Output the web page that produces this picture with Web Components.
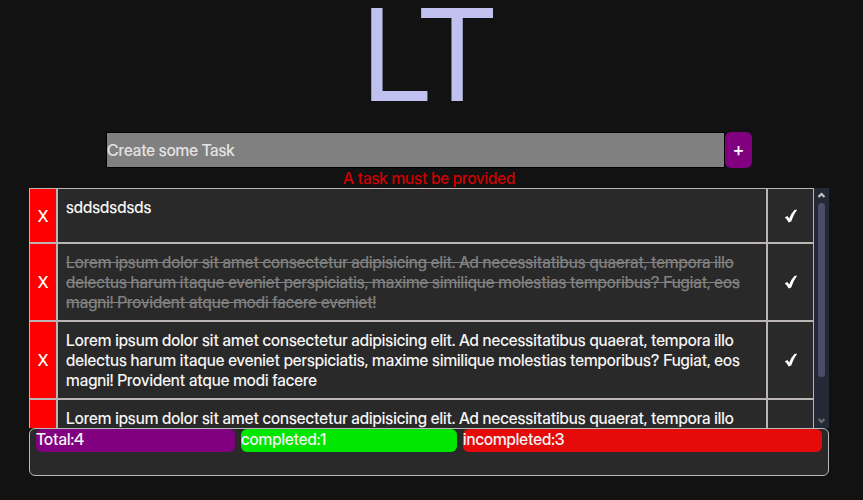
<!DOCTYPE html>
<html lang="en">
<head>
<meta charset="utf-8">
<title>LT</title>
<style>
body { margin: 0; background: #121212; color: #f5f5f5; font: 500 16px/20px "Inter Display", Inter, "Liberation Sans", sans-serif; }
</style>
</head>
<body>
<lt-app></lt-app>
<script>
const define = (name, html, setup) => {
  const template = document.createElement("template");
  template.innerHTML = html;
  customElements.define(name, class extends HTMLElement {
    constructor() {
      super();
      this.attachShadow({ mode: "open" }).append(template.content.cloneNode(true));
    }
    connectedCallback() { if (setup) setup(this, this.shadowRoot); }
  });
};

define("task-form", `
<style>
:host { display: block; padding: 0 77px; text-align: center; }
form { display: flex; height: 36px; }
input { flex: 1; min-width: 0; box-sizing: border-box; margin: 0; padding: 0; border: 1px solid #000; border-radius: 0; background: #808080; color: #f5f5f5; font: inherit; }
input::placeholder { color: #e4e4e4; opacity: 1; }
button { width: 27px; padding: 0; border: 0; border-radius: 6px; background: #800080; color: #fff; font: inherit; font-size: 18px; }
p { margin: 0; padding-top: 1px; line-height: 19px; color: #d00000; }
</style>
<form novalidate>
  <input type="text" placeholder="Create some Task" aria-label="Create some Task" aria-describedby="error">
  <button type="submit" aria-label="Add task">+</button>
</form>
<p id="error" role="alert">A task must be provided</p>`,
(host, root) => root.querySelector("form").addEventListener("submit", e => e.preventDefault()));

define("task-row", `
<style>
:host { display: flex; min-height: 55px; box-sizing: border-box; }
button, .text { box-sizing: border-box; border: 1px solid #bbb5b5; border-radius: 0; }
button { padding: 0; color: #fff; font: inherit; }
.remove { width: 28px; background: #f00; }
.text { flex: 1; padding: 8px; background: #292929; }
.done { width: 47px; background: #292929; }
svg { display: block; margin: auto; }
:host([completed]) .text { color: #808080; text-decoration: line-through; }
</style>
<button class="remove" aria-label="Remove task">X</button>
<div class="text"><slot></slot></div>
<button class="done" aria-label="Toggle completed"><svg width="14" height="14" viewBox="0 0 14 14"><path d="M.8 8.2 3.4 7.1 5.2 9.4Q7.4 4 10.4 1L13.2.6Q9.8 5.2 7.2 12.4L4.6 13.6Q3 10.2.8 8.2Z" fill="#fff"/></svg></button>`);

define("scroll-rail", `
<style>
:host { display: flex; flex-direction: column; align-items: center; width: 15px; background: #242936; }
svg { flex: none; display: block; }
.track { flex: 1; width: 7px; }
.thumb { height: 83%; border-radius: 4px; background: #4b4d66; }
</style>
<svg width="15" height="15" viewBox="0 0 15 15"><path d="M4.5 9 7.5 6 10.5 9" fill="none" stroke="#c4c4c4" stroke-width="2.2"/></svg>
<div class="track"><div class="thumb"></div></div>
<svg width="15" height="15" viewBox="0 0 15 15"><path d="M4.5 6 7.5 9 10.5 6" fill="none" stroke="#6c6c6c" stroke-width="2.2"/></svg>`);

define("task-list", `
<style>
:host { display: flex; height: 48vh; }
.rows { flex: 1; min-width: 0; overflow: auto; scrollbar-width: none; }
</style>
<div class="rows"><slot></slot></div>
<scroll-rail aria-hidden="true"></scroll-rail>`);

define("task-stat", `
<style>
:host { display: block; padding-bottom: 3px; border-radius: 6px; background: var(--stat-color); }
</style><slot></slot>`);

define("task-summary", `
<style>
:host { display: grid; grid-template-columns: 199fr 216fr 359fr; gap: 6px; align-items: start; box-sizing: border-box; min-height: 48px; padding: 0 6px; border: 1px solid #b8b8b8; border-radius: 6px; background: #292929; }
</style><slot></slot>`);

define("lt-app", `
<style>
:host { display: block; padding: 0 34px 0 29px; }
h1 { margin: 0; height: 132px; font-size: 128px; line-height: 110px; font-weight: 400; text-align: center; color: #c1c1f0; }
.total { --stat-color: #800080; }
.complete { --stat-color: #00e600; }
.incomplete { --stat-color: #e60b0b; }
</style>
<h1>LT</h1>
<task-form></task-form>
<task-list>
  <task-row>sddsdsdsds</task-row>
  <task-row completed>Lorem ipsum dolor sit amet consectetur adipisicing elit. Ad necessitatibus quaerat, tempora illo delectus harum itaque eveniet perspiciatis, maxime similique molestias temporibus? Fugiat, eos magni! Provident atque modi facere eveniet!</task-row>
  <task-row>Lorem ipsum dolor sit amet consectetur adipisicing elit. Ad necessitatibus quaerat, tempora illo delectus harum itaque eveniet perspiciatis, maxime similique molestias temporibus? Fugiat, eos magni! Provident atque modi facere</task-row>
  <task-row>Lorem ipsum dolor sit amet consectetur adipisicing elit. Ad necessitatibus quaerat, tempora illo delectus harum itaque eveniet perspiciatis, maxime similique molestias temporibus? Fugiat, eos magni! Provident atque modi facere</task-row>
</task-list>
<task-summary>
  <task-stat class="total">Total:4</task-stat>
  <task-stat class="complete">completed:1</task-stat>
  <task-stat class="incomplete">incompleted:3</task-stat>
</task-summary>`);
</script>
</body>
</html>
